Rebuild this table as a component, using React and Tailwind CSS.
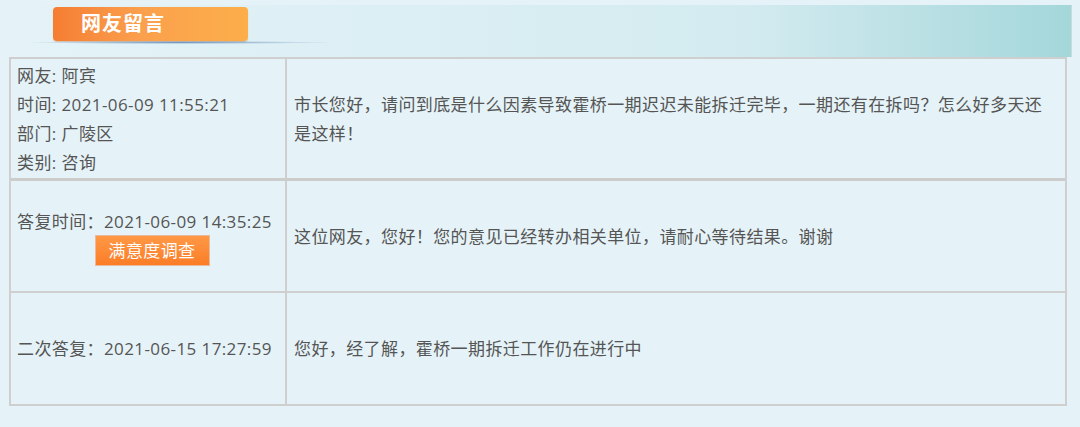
const font = { fontFamily: '"Open Sans", "Noto Sans CJK SC", sans-serif' };

const App = () => {
  return (
    <div
      className="w-[1080px] h-[427px] bg-[#e5f3f8] text-[#555555] text-[17px] tracking-[0.4px] leading-[29px] overflow-hidden"
      style={font}
    >
      {/* Title strip */}
      <div className="mt-[5px] mr-[8px] h-[52px] bg-gradient-to-r from-[#e5f3f8] via-[#d3ebf0] via-70% to-[#a4d7da] border-r border-[#c9dadd]">
        <div className="pt-[2px] pl-[53px]">
          <div className="w-[195px] h-[34px] rounded-[4px] bg-gradient-to-r from-[#f57d32] via-[#fba04d] via-45% to-[#fcae4a] shadow-[0_1px_1px_rgba(180,90,20,0.35)] flex items-center">
            <span className="ml-[28px] text-white font-bold text-[20px] tracking-[1px] leading-none">
              网友留言
            </span>
          </div>
        </div>
        <div className="ml-[25px] w-[310px] h-[3px] bg-[radial-gradient(ellipse_at_center,rgba(90,130,175,0.8),rgba(90,130,175,0)_70%)]" />
      </div>

      {/* Message table */}
      <div className="ml-[9px] w-[1058px] border-2 border-[#cfcfcf] bg-[#e5f3f8]">
        <div className="flex h-[122px] border-b-[3px] border-[#cccccc]">
          <div className="w-[276px] shrink-0 border-r-2 border-[#cfcfcf] px-[6px] flex flex-col justify-center">
            <div>网友: 阿宾</div>
            <div>时间: 2021-06-09 11:55:21</div>
            <div>部门: 广陵区</div>
            <div>类别: 咨询</div>
          </div>
          <div className="flex-1 pl-[7px] pr-[10px] flex items-center">
            <p>
              市长您好，请问到底是什么因素导致霍桥一期迟迟未能拆迁完毕，一期还有在拆吗？怎么好多天还是这样！
            </p>
          </div>
        </div>

        <div className="flex h-[112px] border-b-2 border-[#cfcfcf]">
          <div className="w-[276px] shrink-0 border-r-2 border-[#cfcfcf] px-[6px] flex flex-col justify-center items-center">
            <div className="self-start whitespace-nowrap">答复时间：2021-06-09 14:35:25</div>
            <button className="ml-[8px] w-[113px] h-[29px] bg-gradient-to-b from-[#ff9845] to-[#fb7d26] text-white text-[17px] leading-[29px] shadow-[0_0_0_1px_rgba(240,130,60,0.5)]">
              满意度调查
            </button>
          </div>
          <div className="flex-1 px-[7px] flex items-center">
            这位网友，您好！您的意见已经转办相关单位，请耐心等待结果。谢谢
          </div>
        </div>

        <div className="flex h-[111px]">
          <div className="w-[276px] shrink-0 border-r-2 border-[#cfcfcf] px-[6px] flex items-center whitespace-nowrap">
            二次答复：2021-06-15 17:27:59
          </div>
          <div className="flex-1 px-[7px] flex items-center">
            您好，经了解，霍桥一期拆迁工作仍在进行中
          </div>
        </div>
      </div>
    </div>
  );
};

export default App;
